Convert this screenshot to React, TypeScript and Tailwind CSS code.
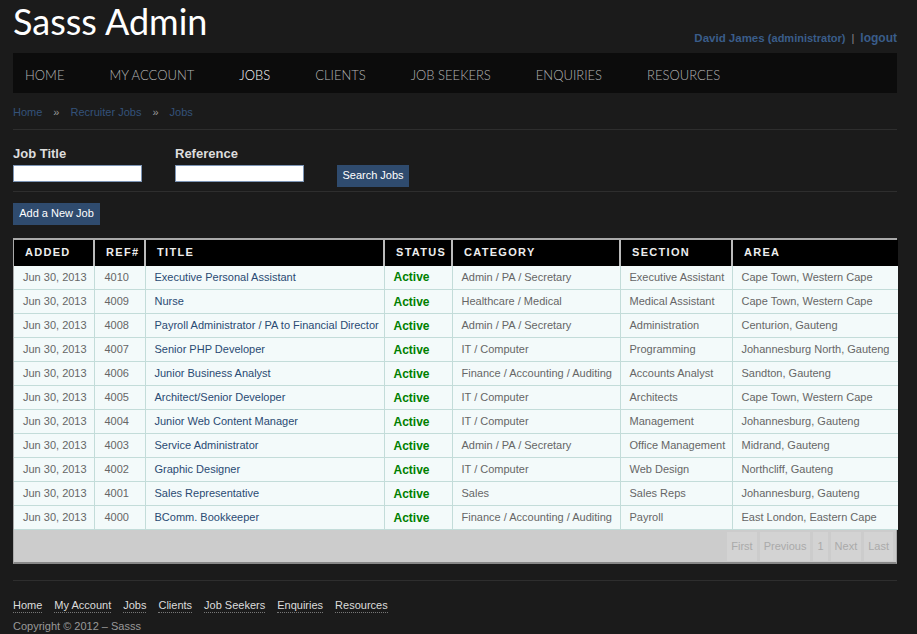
const nav = ['HOME', 'MY ACCOUNT', 'JOBS', 'CLIENTS', 'JOB SEEKERS', 'ENQUIRIES', 'RESOURCES']

const jobs = [
  ['4010', 'Executive Personal Assistant', 'Admin / PA / Secretary', 'Executive Assistant', 'Cape Town, Western Cape'],
  ['4009', 'Nurse', 'Healthcare / Medical', 'Medical Assistant', 'Cape Town, Western Cape'],
  ['4008', 'Payroll Administrator / PA to Financial Director', 'Admin / PA / Secretary', 'Administration', 'Centurion, Gauteng'],
  ['4007', 'Senior PHP Developer', 'IT / Computer', 'Programming', 'Johannesburg North, Gauteng'],
  ['4006', 'Junior Business Analyst', 'Finance / Accounting / Auditing', 'Accounts Analyst', 'Sandton, Gauteng'],
  ['4005', 'Architect/Senior Developer', 'IT / Computer', 'Architects', 'Cape Town, Western Cape'],
  ['4004', 'Junior Web Content Manager', 'IT / Computer', 'Management', 'Johannesburg, Gauteng'],
  ['4003', 'Service Administrator', 'Admin / PA / Secretary', 'Office Management', 'Midrand, Gauteng'],
  ['4002', 'Graphic Designer', 'IT / Computer', 'Web Design', 'Northcliff, Gauteng'],
  ['4001', 'Sales Representative', 'Sales', 'Sales Reps', 'Johannesburg, Gauteng'],
  ['4000', 'BComm. Bookkeeper', 'Finance / Accounting / Auditing', 'Payroll', 'East London, Eastern Cape'],
]

const cols = [
  { label: 'ADDED', w: 'w-[80px]' },
  { label: 'REF#', w: 'w-[51px]' },
  { label: 'TITLE', w: 'w-[239px]' },
  { label: 'STATUS', w: 'w-[68px]' },
  { label: 'CATEGORY', w: 'w-[168px]' },
  { label: 'SECTION', w: 'w-[112px]' },
  { label: 'AREA', w: 'w-[166px]' },
]

const footerLinks = ['Home', 'My Account', 'Jobs', 'Clients', 'Job Seekers', 'Enquiries', 'Resources']

export default function App() {
  return (
    <div className="min-h-[634px] bg-[#1b1b1b] pl-[13px] pr-[20px] text-[11px] font-['Liberation_Sans',sans-serif] text-[#666]">
      {/* Header */}
      <div className="flex h-[53px] items-start justify-between">
        <h1 className="mt-[-1px] font-['Lato',sans-serif] text-[36px] leading-[44px] text-white">Sasss Admin</h1>
        <div className="mt-[29px] flex items-baseline gap-[6px] font-bold text-[#3a5d8a]">
          <span className="text-[11.5px]">
            David James <span className="text-[11px]">(administrator)</span>
          </span>
          <span className="font-normal text-[#888]">|</span>
          <span className="text-[12px]">logout</span>
        </div>
      </div>

      {/* Nav */}
      <div className="flex h-[40px] items-center gap-[45px] bg-[#0c0c0c] pl-3 pt-[6px] font-['Lato',sans-serif] text-[13px] font-light">
        {nav.map((n) => (
          <span key={n} className={n === 'JOBS' ? 'text-white' : 'text-[#b4b4b4]'}>
            {n}
          </span>
        ))}
      </div>

      {/* Breadcrumb */}
      <div className="flex h-[36px] items-center pt-[2px] text-[#34527a]">
        <span>Home</span>
        <span className="mx-[11px] text-[#999]">»</span>
        <span>Recruiter Jobs</span>
        <span className="mx-[11px] text-[#999]">»</span>
        <span>Jobs</span>
      </div>
      <div className="h-px bg-[#2e2e2e]" />

      {/* Search form */}
      <div className="flex items-end gap-[33px] pb-[4px] pt-[14px]">
        <label className="flex flex-col">
          <span className="mb-[1px] text-[13px] font-bold text-[#ddd]">Job Title</span>
          <input className="mb-[5px] h-[17px] w-[129px] border border-[#7d95b5] bg-white" />
        </label>
        <label className="flex flex-col">
          <span className="mb-[1px] text-[13px] font-bold text-[#ddd]">Reference</span>
          <input className="mb-[5px] h-[17px] w-[129px] border border-[#7d95b5] bg-white" />
        </label>
        <button className="h-[22px] w-[72px] bg-[#2f4b6e] text-[11px] text-white">Search Jobs</button>
      </div>
      <div className="h-px bg-[#2e2e2e]" />

      <button className="mt-[11px] h-[22px] w-[87px] bg-[#2f4b6e] text-[11px] text-white">Add a New Job</button>

      {/* Table */}
      <div className="mt-[13px] border-t-2 border-l border-r border-[#aaa] border-b-2 border-b-[#888] bg-[#ccc]">
        <table className="w-full table-fixed border-collapse">
          <thead>
            <tr className="h-[26px] bg-black">
              {cols.map((c, i) => (
                <th
                  key={c.label}
                  className={`${c.w} ${i > 0 ? 'border-l-2 border-[#bbb]' : ''} pl-[11px] text-left text-[11px] font-bold tracking-[1.3px] text-[#eee]`}
                >
                  {c.label}
                </th>
              ))}
            </tr>
          </thead>
          <tbody>
            {jobs.map((j) => (
              <tr key={j[0]} className="h-[24px] border-b border-[#c3dcd9] bg-[#f3fafa]">
                <td className="pl-[9px] whitespace-nowrap">Jun 30, 2013</td>
                <td className="border-l border-[#c3dcd9] pl-[10px]">{j[0]}</td>
                <td className="border-l border-[#c3dcd9] pl-[9px] whitespace-nowrap text-[#2a4a73]">{j[1]}</td>
                <td className="border-l border-[#c3dcd9] pl-[9px] text-[12px] font-bold text-[#008000]">Active</td>
                <td className="border-l border-[#c3dcd9] pl-[9px] whitespace-nowrap">{j[2]}</td>
                <td className="border-l border-[#c3dcd9] pl-[9px] whitespace-nowrap">{j[3]}</td>
                <td className="border-l border-[#c3dcd9] pl-[9px] whitespace-nowrap">{j[4]}</td>
              </tr>
            ))}
          </tbody>
        </table>
        <div className="flex h-[32px] items-center justify-end gap-[3px] pr-[3px]">
          {['First', 'Previous', '1', 'Next', 'Last'].map((p) => (
            <span key={p} className="flex h-[29px] items-center bg-[#d3d3d3] px-[4px] text-[#aaa]">
              {p}
            </span>
          ))}
        </div>
      </div>

      {/* Footer */}
      <div className="mt-[16px] h-px bg-[#2e2e2e]" />
      <div className="mt-[18px] flex gap-[12px] text-[#ddd]">
        {footerLinks.map((l) => (
          <span key={l} className="border-b border-dotted border-[#777] leading-[13px]">
            {l}
          </span>
        ))}
      </div>
      <div className="mt-[5px] text-[#999]">Copyright © 2012 – Sasss</div>
    </div>
  )
}
